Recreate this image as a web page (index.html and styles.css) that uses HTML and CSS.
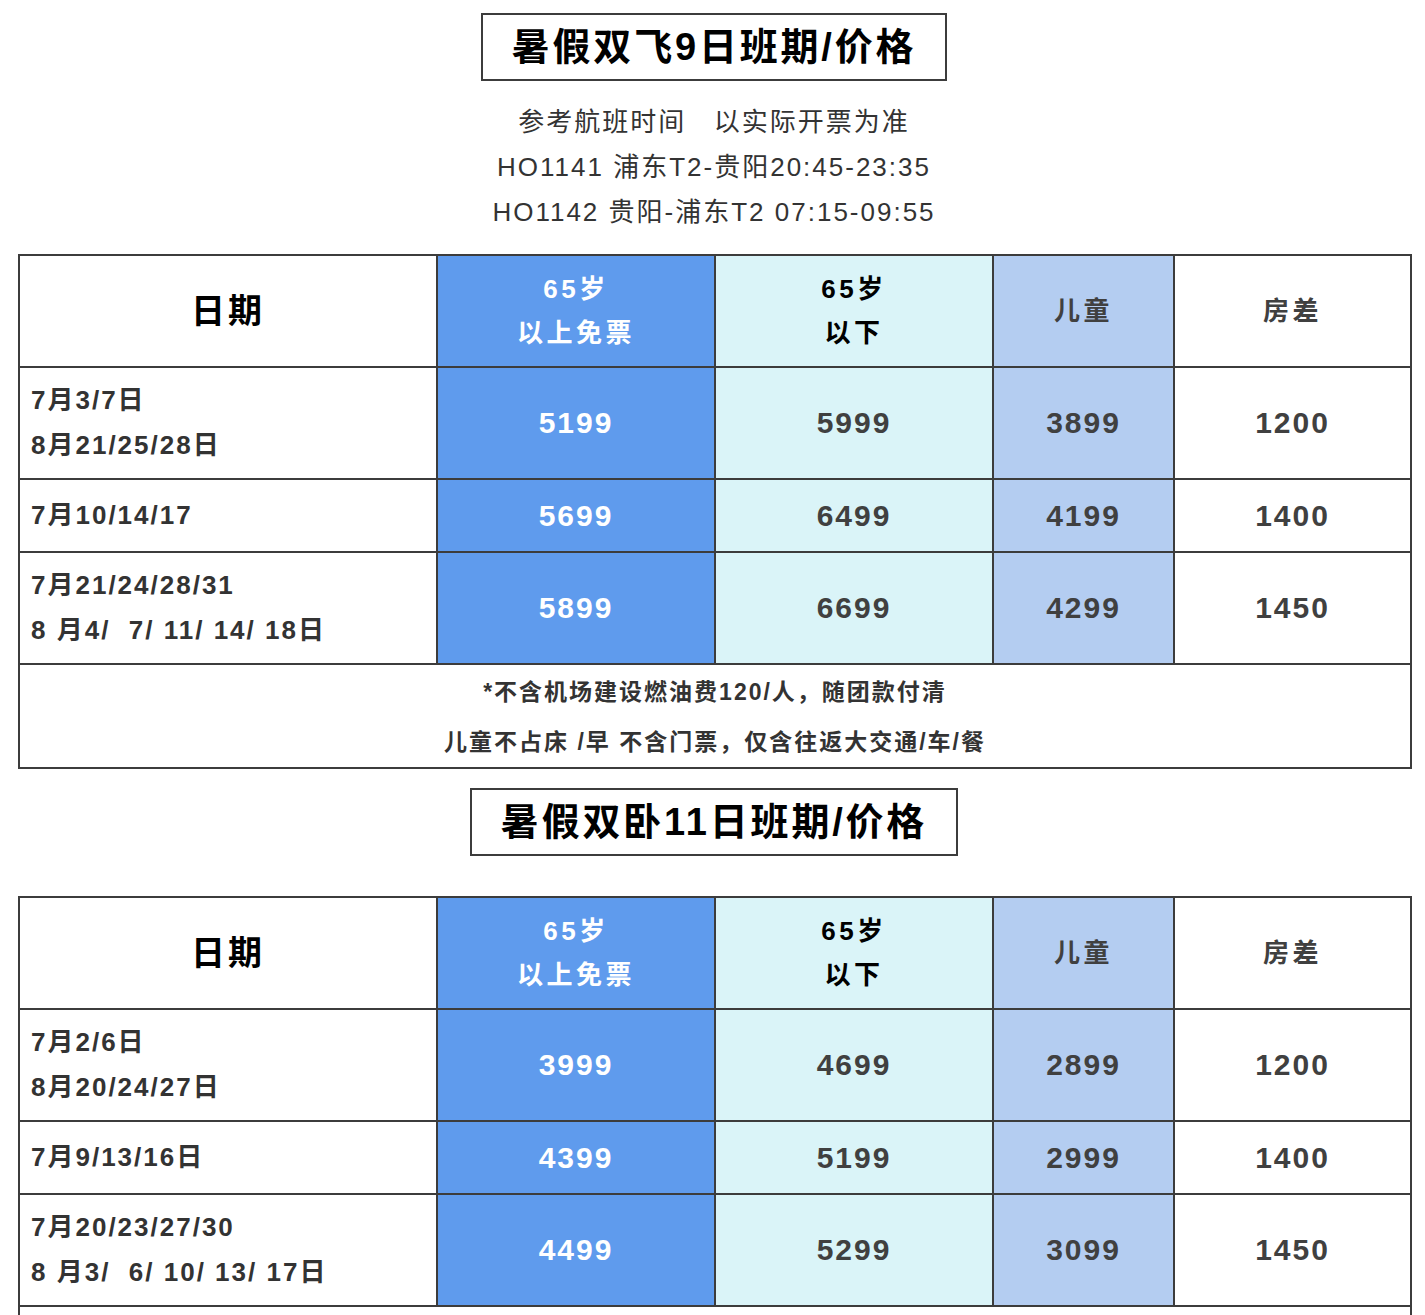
FILE: index.html
```html
<!DOCTYPE html>
<html lang="zh-CN">
<head>
<meta charset="utf-8">
<title>暑假班期价格</title>
<link rel="stylesheet" href="styles.css">
</head>
<body>
<div class="page">
  <div class="title-wrap first"><div class="title">暑假双飞9日班期/价格</div></div>
  <div class="sub">
    <div>参考航班时间&nbsp;&nbsp;&nbsp;以实际开票为准</div>
    <div>HO1141 浦东T2-贵阳20:45-23:35</div>
    <div>HO1142 贵阳-浦东T2 07:15-09:55</div>
  </div>
  <table class="price">
    <colgroup><col class="c1"><col class="c2"><col class="c3"><col class="c4"><col class="c5"></colgroup>
    <tr class="head">
      <td class="date-h">日期</td>
      <td class="blue">65岁<br>以上免票</td>
      <td class="cyan dark">65岁<br>以下</td>
      <td class="lb">儿童</td>
      <td>房差</td>
    </tr>
    <tr class="tall">
      <td class="date">7月3/7日<br>8月21/25/28日</td>
      <td class="blue num">5199</td><td class="cyan num">5999</td><td class="lb num">3899</td><td class="num">1200</td>
    </tr>
    <tr class="short">
      <td class="date">7月10/14/17</td>
      <td class="blue num">5699</td><td class="cyan num">6499</td><td class="lb num">4199</td><td class="num">1400</td>
    </tr>
    <tr class="tall">
      <td class="date">7月21/24/28/31<br>8 月4/&nbsp; 7/ 11/ 14/ 18日</td>
      <td class="blue num">5899</td><td class="cyan num">6699</td><td class="lb num">4299</td><td class="num">1450</td>
    </tr>
    <tr class="foot">
      <td colspan="5">*不含机场建设燃油费120/人，随团款付清<br>儿童不占床 /早 不含门票，仅含往返大交通/车/餐</td>
    </tr>
  </table>
  <div class="title-wrap second"><div class="title">暑假双卧11日班期/价格</div></div>
  <table class="price">
    <colgroup><col class="c1"><col class="c2"><col class="c3"><col class="c4"><col class="c5"></colgroup>
    <tr class="head">
      <td class="date-h">日期</td>
      <td class="blue">65岁<br>以上免票</td>
      <td class="cyan dark">65岁<br>以下</td>
      <td class="lb">儿童</td>
      <td>房差</td>
    </tr>
    <tr class="tall">
      <td class="date">7月2/6日<br>8月20/24/27日</td>
      <td class="blue num">3999</td><td class="cyan num">4699</td><td class="lb num">2899</td><td class="num">1200</td>
    </tr>
    <tr class="short">
      <td class="date">7月9/13/16日</td>
      <td class="blue num">4399</td><td class="cyan num">5199</td><td class="lb num">2999</td><td class="num">1400</td>
    </tr>
    <tr class="tall">
      <td class="date">7月20/23/27/30<br>8 月3/&nbsp; 6/ 10/ 13/ 17日</td>
      <td class="blue num">4499</td><td class="cyan num">5299</td><td class="lb num">3099</td><td class="num">1450</td>
    </tr>
    <tr class="foot">
      <td colspan="5">*不含机场建设燃油费120/人，随团款付清<br>儿童不占床 /早 不含门票，仅含往返大交通/车/餐</td>
    </tr>
  </table>
</div>
</body>
</html>
```

FILE: styles.css
```css
html, body {
  margin: 0;
  padding: 0;
  background: #ffffff;
}
body {
  font-family: "Liberation Sans", Arial, "Noto Sans CJK SC", sans-serif;
  color: #333333;
}
.page {
  width: 1392px;
  margin-left: 18px;
}
.title-wrap {
  text-align: center;
}
.title-wrap.first {
  padding-top: 13px;
}
.title-wrap.second {
  padding-top: 19px;
  padding-bottom: 40px;
}
.title {
  display: inline-block;
  border: 2px solid #3c3c3c;
  padding: 0 29px;
  font-size: 38px;
  font-weight: 700;
  line-height: 64px;
  letter-spacing: 2.8px;
  color: #000000;
}
.sub {
  margin: 19px 0 19px;
  text-align: center;
  font-size: 26px;
  line-height: 45px;
  letter-spacing: 2px;
  color: #333333;
}
.price {
  width: 1392px;
  border-collapse: collapse;
  table-layout: fixed;
  border: 2px solid #3c3c3c;
}
.c1 { width: 418px; }
.c2 { width: 278px; }
.c3 { width: 278px; }
.c4 { width: 181px; }
.c5 { width: 237px; }
.price td {
  border: 2px solid #3c3c3c;
  padding: 0;
  text-align: center;
  vertical-align: middle;
  font-weight: 700;
  font-size: 26px;
  letter-spacing: 2px;
  color: #404040;
}
.head { height: 112px; }
.price .head td {
  line-height: 44px;
  letter-spacing: 3.5px;
}
.tall { height: 112px; }
.short { height: 73px; }
.foot { height: 104px; }
.price .head td.date-h {
  font-size: 34px;
  letter-spacing: 3px;
  color: #000000;
}
.price td.blue {
  background: #5f9bed;
  color: #ffffff;
}
.price td.cyan {
  background: #daf4f8;
}
.price td.lb {
  background: #b4cdf1;
}
.price td.dark {
  color: #000000;
}
.price td.date {
  text-align: left;
  padding-left: 11px;
  line-height: 45px;
  color: #333333;
}
.price td.num {
  font-size: 30px;
}
.price .foot td {
  padding-top: 2px;
  font-size: 23px;
  line-height: 50px;
  letter-spacing: 2px;
  color: #333333;
}
```
